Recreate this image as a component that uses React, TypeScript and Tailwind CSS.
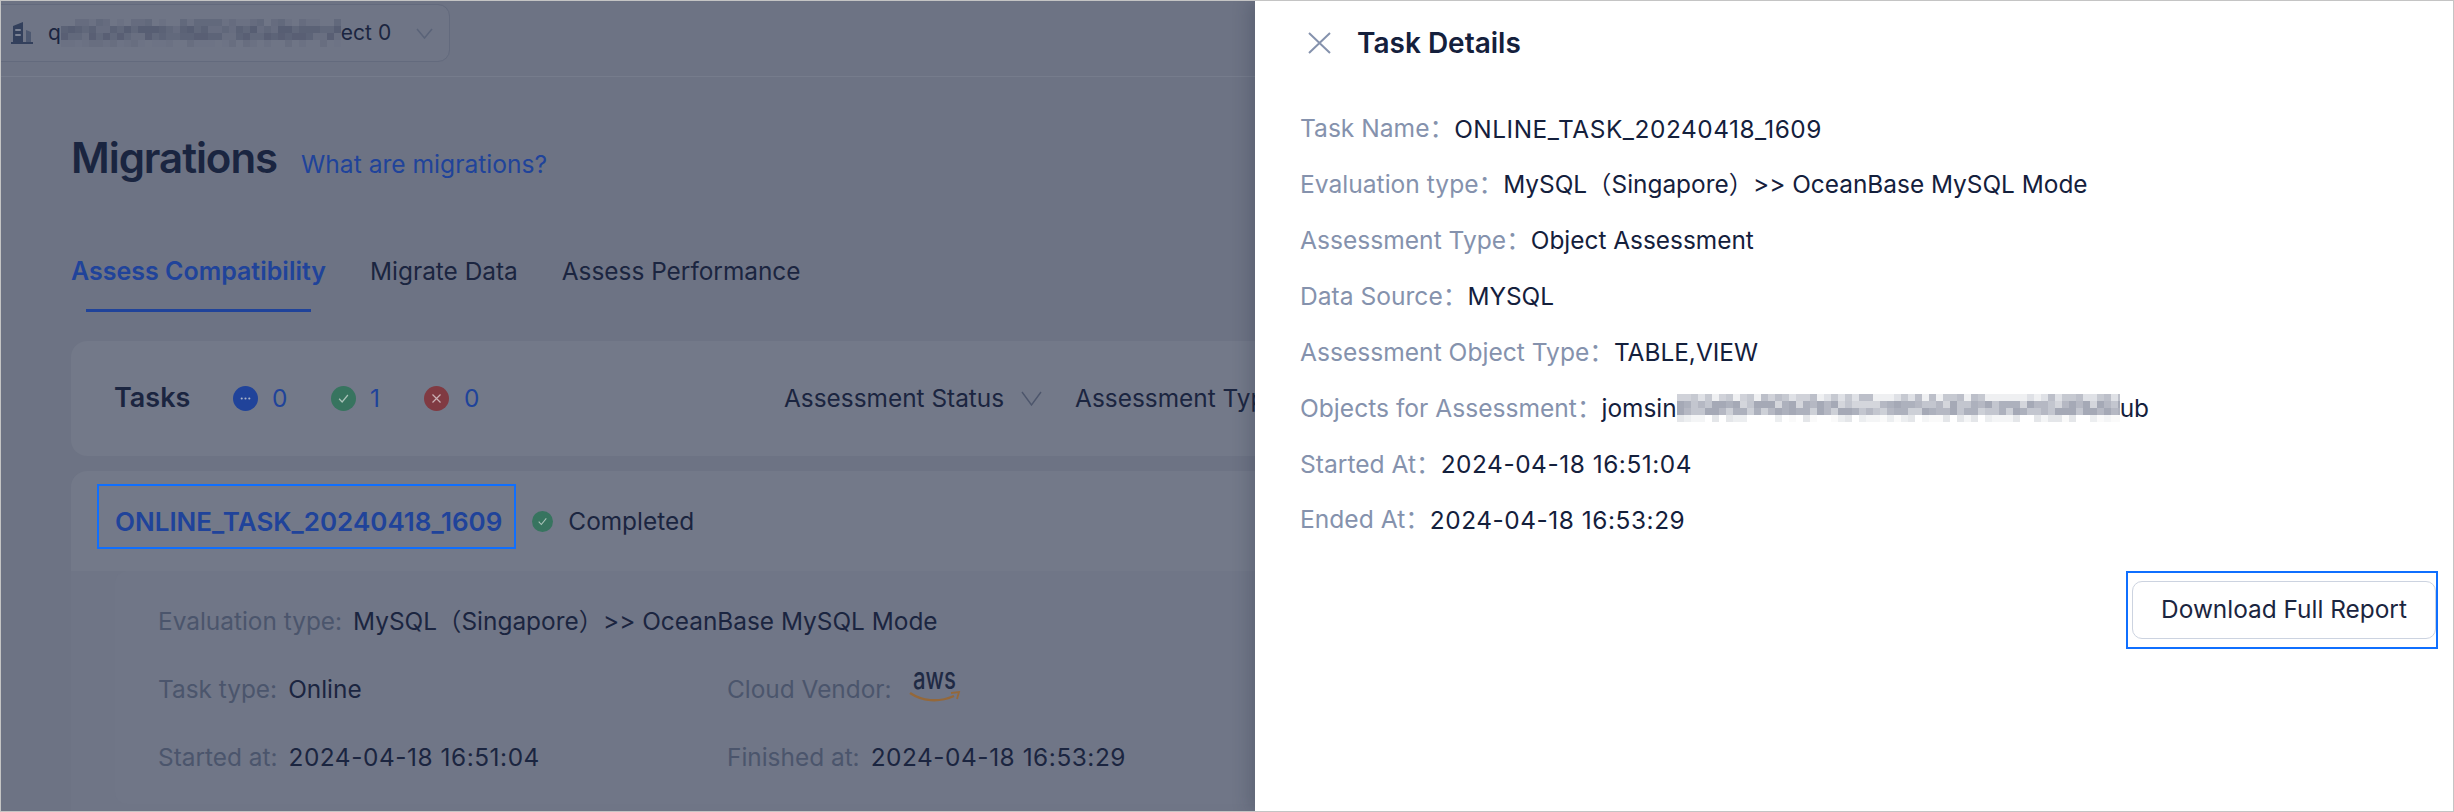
import type { ReactNode } from "react";
import { Ellipsis } from "lucide-react";

// pixelated redaction, each row has its own range of tints
const Mosaic = ({
  width,
  rows,
  seed,
}: {
  width: number;
  rows: string[][];
  seed: number;
}) => {
  const cell = 7;
  const cols = Math.ceil(width / cell);
  const rects: ReactNode[] = [];
  rows.forEach((palette, y) => {
    for (let x = 0; x < cols; x++) {
      const r = Math.abs(Math.sin(x * 12.9898 + y * 78.233 + seed) * 43758.5453);
      const pick = Math.floor((r - Math.floor(r)) * palette.length);
      rects.push(
        <rect key={`${x}-${y}`} x={x * cell} y={y * cell} width={cell} height={cell} fill={palette[pick]} />
      );
    }
  });
  return (
    <svg width={width} height={rows.length * cell} className="block shrink-0">
      {rects}
    </svg>
  );
};

const Chevron = ({ w, h, color, stroke }: { w: number; h: number; color: string; stroke: number }) => (
  <svg width={w} height={h} viewBox={`0 0 ${w} ${h}`} fill="none" stroke={color} strokeWidth={stroke} className="shrink-0">
    <path d={`M1 1L${w / 2} ${h - 1}L${w - 1} 1`} />
  </svg>
);

const Building = () => (
  <svg width="22" height="22" viewBox="0 0 22 22" className="shrink-0">
    <path d="M2 20V4l10-4v20z" fill="#33405c" />
    <path d="M15 20V8l5 2v10z" fill="#4d5870" />
    <rect x="0" y="20" width="22" height="2" fill="#33405c" />
    <rect x="4" y="7" width="6" height="2" rx="1" fill="#7c8394" />
    <rect x="4" y="12" width="6" height="2" rx="1" fill="#7c8394" />
  </svg>
);

const AwsLogo = () => (
  <svg width="50" height="32" viewBox="0 0 50 32" className="overflow-visible shrink-0">
    <text
      x="3"
      y="16"
      fontSize="30"
      fontWeight="500"
      fill="#1f2a44"
      fontFamily="Inter, sans-serif"
      textLength="43"
      lengthAdjust="spacingAndGlyphs"
    >
      aws
    </text>
    <path d="M0 20c12 8 28 10 44 3" fill="none" stroke="#94683a" strokeWidth="2.4" />
    <path d="M41 20l8-1-2 7" fill="none" stroke="#94683a" strokeWidth="1.8" />
  </svg>
);

const CheckMark = ({ size }: { size: number }) => (
  <svg width={size} height={size} viewBox="0 0 12 12" fill="none" stroke="#a9c2b8" strokeWidth="1">
    <path d="M2.5 6.2l2.4 2.6 4.6-5.6" />
  </svg>
);

const StatusDot = ({ className, children }: { className: string; children: ReactNode }) => (
  <span className={`flex items-center justify-center rounded-full shrink-0 ${className}`}>{children}</span>
);

const MetaRow = ({ label, children }: { label: string; children: ReactNode }) => (
  <div className="flex items-center gap-[11px] h-8 whitespace-nowrap">
    <span className="text-[#4b556c]">{label}</span>
    <span className="text-[#1b2540]">{children}</span>
  </div>
);

const DetailRow = ({ label, children }: { label: string; children: ReactNode }) => (
  <div className="flex items-center h-[55.85px] whitespace-nowrap text-[24.4px]">
    <span className="text-[#8592ad] text-[24.6px]">{label}：</span>
    <span className="text-[#14203c] flex items-center">{children}</span>
  </div>
);

// digits run a little wider in the reference than in the installed Inter
const Wide = ({ children }: { children: ReactNode }) => <span className="tracking-[0.55px]">{children}</span>;

export default function App() {
  return (
    <div className="flex w-[2454px] h-[812px] overflow-hidden border border-[#c4c4c4] font-['Inter','Noto_Sans_CJK_SC',sans-serif]">
      {/* dimmed page behind the drawer */}
      <div className="w-[1254px] shrink-0 h-full bg-[#6d7384] overflow-hidden text-[24.4px] text-[#1b2540]">
        <div className="h-[76px] border-b border-[#767c8c] pt-[3px]">
          <div className="flex items-center w-[465px] h-[58px] -ml-[16px] pl-[25px] border border-[#636a7d] rounded-[12px] bg-[#6f7586]">
            <Building />
            <span className="ml-[15px] text-[21px] flex items-center">
              q
              <Mosaic
                width={280}
                seed={11}
                rows={[
                  ["#6f7586", "#6b7183", "#666c7f", "#62697c"],
                  ["#5b6276", "#575e73", "#61687b", "#676d80"],
                  ["#5d6478", "#595f74", "#62697c", "#696f81"],
                  ["#6b7183", "#686e80", "#6f7586", "#6d7385"],
                ]}
              />
              ect 0
            </span>
            <span className="ml-[25px]">
              <Chevron w={17} h={11} color="#5a6378" stroke={1.5} />
            </span>
          </div>
        </div>

        <div className="pl-[70px]">
          <div className="flex items-baseline gap-[24px] mt-[51px]">
            <h1 className="text-[42px] font-semibold leading-[60px] tracking-tight text-[#1a2540]">Migrations</h1>
            <a className="text-[#20439a] text-[24.6px]">What are migrations?</a>
          </div>

          <div className="flex gap-[44px] mt-[65px] h-[88px]">
            <div className="relative">
              <span className="font-semibold text-[#20439a] text-[25px]">Assess Compatibility</span>
              <div className="absolute left-[15px] right-[15px] bottom-[29px] h-[3px] bg-[#20439a]" />
            </div>
            <span>Migrate Data</span>
            <span>Assess Performance</span>
          </div>

          <div className="h-[115px] w-[1400px] rounded-[16px] bg-[#737989] flex items-center pl-[43px]">
            <span className="font-semibold text-[27px] w-[119px]">Tasks</span>
            <StatusDot className="bg-[#20439a] w-[25px] h-[25px]">
              <Ellipsis size={13} className="text-[#a9b3c9]" />
            </StatusDot>
            <span className="ml-[14px] text-[#20439a] w-[59px]">0</span>
            <StatusDot className="bg-[#37745f] w-[25px] h-[25px]">
              <CheckMark size={15} />
            </StatusDot>
            <span className="ml-[14px] text-[#20439a] w-[54px]">1</span>
            <StatusDot className="bg-[#803a42] w-[25px] h-[25px]">
              <svg width="11" height="11" viewBox="0 0 11 11" stroke="#c9b0b4" strokeWidth="1.2">
                <path d="M1.5 1.5l8 8M9.5 1.5l-8 8" />
              </svg>
            </StatusDot>
            <span className="ml-[15px] text-[#20439a] w-[320px]">0</span>
            <span>Assessment Status</span>
            <span className="ml-[17px]">
              <Chevron w={21} h={15} color="#4d566c" stroke={1.4} />
            </span>
            <span className="ml-[33px] whitespace-nowrap">Assessment Type</span>
          </div>

          <div className="mt-[15px] w-[1400px] h-[400px] rounded-[16px] bg-[#6f7586] overflow-hidden">
            <div className="flex items-start h-[100px] pt-[13px] pl-[26px] bg-[#737989]">
              <span className="flex items-center h-[65px] pt-[10px] pl-[16px] pr-[12px] border-2 border-[#0f6fff] font-semibold text-[#20439a] text-[26px]">
                ONLINE_TASK_20240418_1609
              </span>
              <div className="flex items-center h-[65px] pt-[10px]">
                <StatusDot className="bg-[#37745f] w-[21px] h-[21px] ml-[16px]">
                  <CheckMark size={13} />
                </StatusDot>
                <span className="ml-[15px]">Completed</span>
              </div>
            </div>
            <div className="ml-[44px] h-[233px] rounded-[12px] bg-[#707687] pl-[43px] pt-[34px] flex flex-col gap-[36px]">
              <MetaRow label="Evaluation type:">MySQL（Singapore）&gt;&gt; OceanBase MySQL Mode</MetaRow>
              <div className="flex">
                <div className="w-[569px]">
                  <MetaRow label="Task type:">Online</MetaRow>
                </div>
                <div className="flex items-center gap-[18px] h-8 text-[#4b556c]">
                  Cloud Vendor:
                  <AwsLogo />
                </div>
              </div>
              <div className="flex">
                <div className="w-[569px]">
                  <MetaRow label="Started at:">
                    <Wide>2024-04-18 16:51:04</Wide>
                  </MetaRow>
                </div>
                <MetaRow label="Finished at:">
                  <Wide>2024-04-18 16:53:29</Wide>
                </MetaRow>
              </div>
            </div>
          </div>
        </div>
      </div>

      {/* drawer */}
      <div className="flex-1 h-full bg-white shadow-[-6px_0_16px_rgba(30,40,60,0.22)] relative">
        <div className="flex items-center h-[84px] pl-[53px]">
          <svg width="23" height="22" viewBox="0 0 23 22" stroke="#8592ad" strokeWidth="2" className="shrink-0">
            <path d="M1 1l21 20M22 1L1 21" />
          </svg>
          <span className="ml-[26px] text-[28px] font-semibold text-[#14203c]">Task Details</span>
        </div>
        <div className="pl-[45px] pt-[16px]">
          <DetailRow label="Task Name">
            <Wide>ONLINE_TASK_20240418_1609</Wide>
          </DetailRow>
          <DetailRow label="Evaluation type">MySQL（Singapore）&gt;&gt; OceanBase MySQL Mode</DetailRow>
          <DetailRow label="Assessment Type">Object Assessment</DetailRow>
          <DetailRow label="Data Source">MYSQL</DetailRow>
          <DetailRow label="Assessment Object Type">TABLE,VIEW</DetailRow>
          <DetailRow label="Objects for Assessment">
            jomsin
            <Mosaic
              width={443}
              seed={5}
              rows={[
                ["#d0d2d9", "#dfe1e6", "#eff0f2", "#bcbfc9", "#c6c9d1"],
                ["#b5b8c3", "#c3c6cf", "#a5a9b6", "#d4d6dc", "#adb1bd"],
                ["#b5b8c3", "#c3c6cf", "#a5a9b6", "#cdd0d7", "#adb1bd"],
                ["#f4f5f6", "#fafafa", "#eceef0", "#ffffff", "#e4e6e9"],
              ]}
            />
            ub
          </DetailRow>
          <DetailRow label="Started At">
            <Wide>2024-04-18 16:51:04</Wide>
          </DetailRow>
          <DetailRow label="Ended At">
            <Wide>2024-04-18 16:53:29</Wide>
          </DetailRow>
        </div>
        <div className="flex justify-end pr-[15px] mt-[23px]">
          <div className="border-2 border-[#0f6fff] pl-[4px] py-[8px]">
            <button className="w-[304px] h-[58px] rounded-[10px] border border-[#ccd3e0] text-[24.4px] text-[#1b2540]">
              Download Full Report
            </button>
          </div>
        </div>
      </div>
    </div>
  );
}
